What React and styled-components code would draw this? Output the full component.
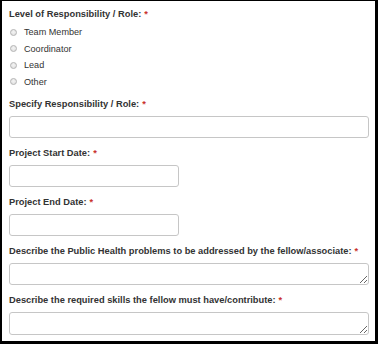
import React from "react";
import styled, { createGlobalStyle } from "styled-components";

const GlobalStyle = createGlobalStyle`
  html, body {
    margin: 0;
    padding: 0;
    background: #fff;
  }
`;

const Frame = styled.form`
  box-sizing: border-box;
  width: 378px;
  height: 344px;
  border-style: solid;
  border-color: #000;
  border-width: 1px 3px 3px 2px;
  padding: 5.5px 6px 0 7px;
  background: #fff;
  font-family: "Liberation Sans", Arial, sans-serif;
  color: #333;
  overflow: hidden;
`;

const Label = styled.div`
  font-size: 9.3px;
  font-weight: bold;
  line-height: 14px;
  height: 14px;
  white-space: nowrap;
  color: #333;
`;

const Req = styled.span`
  color: #c9302c;
  margin-left: 3px;
`;

const RadioList = styled.div`
  display: flex;
  flex-direction: column;
  margin: 3.25px 0 7.25px;
`;

const RadioRow = styled.label`
  display: flex;
  align-items: center;
  height: 16.5px;
  font-size: 9.1px;
  color: #333;
`;

const RadioDot = styled.span`
  box-sizing: border-box;
  width: 7px;
  height: 7px;
  margin: 0 7px 0 1px;
  border-radius: 50%;
  border: 1px solid #b4b4b4;
  background: radial-gradient(circle at 50% 40%, #f4f4f4 0%, #dcdcdc 100%);
`;

const Field = styled.div`
  display: flex;
  flex-direction: column;
  margin-bottom: 8px;
`;

const TextInput = styled.input`
  box-sizing: border-box;
  display: block;
  margin: 5px 0 0;
  width: ${(p) => (p.$short ? "170px" : "360px")};
  height: 22px;
  padding: 2px 6px;
  border: 1px solid #c6c6c6;
  border-radius: 3px;
  background: #fff;
  font-family: inherit;
  font-size: 10px;
  outline: none;
`;

const TextArea = styled.textarea`
  box-sizing: border-box;
  display: block;
  margin: 5px 0 0;
  width: 360px;
  height: ${(p) => p.$h || 22}px;
  padding: 2px 6px;
  border: 1px solid #c6c6c6;
  border-radius: 3px;
  background: #fff;
  font-family: inherit;
  font-size: 10px;
  resize: both;
  outline: none;
`;

const roles = ["Team Member", "Coordinator", "Lead", "Other"];

export default function App() {
  return (
    <>
      <GlobalStyle />
      <Frame>
        <Label>
          Level of Responsibility / Role:<Req>*</Req>
        </Label>
        <RadioList>
          {roles.map((r) => (
            <RadioRow key={r}>
              <RadioDot />
              {r}
            </RadioRow>
          ))}
        </RadioList>

        <Field>
          <Label>
            Specify Responsibility / Role:<Req>*</Req>
          </Label>
          <TextInput type="text" />
        </Field>

        <Field>
          <Label>
            Project Start Date:<Req>*</Req>
          </Label>
          <TextInput type="text" $short />
        </Field>

        <Field>
          <Label>
            Project End Date:<Req>*</Req>
          </Label>
          <TextInput type="text" $short />
        </Field>

        <Field>
          <Label>
            Describe the Public Health problems to be addressed by the fellow/associate:<Req>*</Req>
          </Label>
          <TextArea $h={22} />
        </Field>

        <Field>
          <Label>
            Describe the required skills the fellow must have/contribute:<Req>*</Req>
          </Label>
          <TextArea $h={23} />
        </Field>
      </Frame>
    </>
  );
}
